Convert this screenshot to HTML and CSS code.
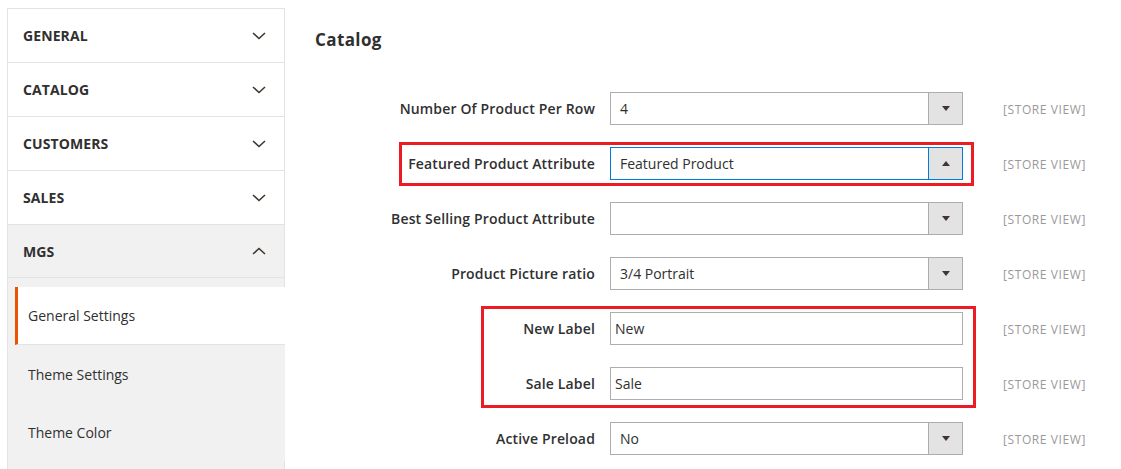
FILE: index.html
```html
<!DOCTYPE html>
<html lang="en">
<head>
<meta charset="utf-8">
<title>Configuration</title>
<link rel="stylesheet" href="styles.css">
</head>
<body>
<div class="page">
  <aside class="sidebar">
    <div class="tab">
      <span class="tab-title">General</span>
      <svg class="chev" width="14" height="8" viewBox="0 0 14 8"><path d="M1 1 L7 6.5 L13 1" fill="none" stroke="#41362f" stroke-width="1.6"/></svg>
    </div>
    <div class="tab">
      <span class="tab-title">Catalog</span>
      <svg class="chev" width="14" height="8" viewBox="0 0 14 8"><path d="M1 1 L7 6.5 L13 1" fill="none" stroke="#41362f" stroke-width="1.6"/></svg>
    </div>
    <div class="tab">
      <span class="tab-title">Customers</span>
      <svg class="chev" width="14" height="8" viewBox="0 0 14 8"><path d="M1 1 L7 6.5 L13 1" fill="none" stroke="#41362f" stroke-width="1.6"/></svg>
    </div>
    <div class="tab">
      <span class="tab-title">Sales</span>
      <svg class="chev" width="14" height="8" viewBox="0 0 14 8"><path d="M1 1 L7 6.5 L13 1" fill="none" stroke="#41362f" stroke-width="1.6"/></svg>
    </div>
    <div class="tab tab-open">
      <span class="tab-title">MGS</span>
      <svg class="chev" width="14" height="8" viewBox="0 0 14 8"><path d="M1 7 L7 1.5 L13 7" fill="none" stroke="#41362f" stroke-width="1.6"/></svg>
    </div>
    <ul class="subnav">
      <li class="subitem active">General Settings</li>
      <li class="subitem">Theme Settings</li>
      <li class="subitem">Theme Color</li>
    </ul>
  </aside>

  <main class="content">
    <h2 class="section-title">Catalog</h2>
    <div class="form">
      <div class="row">
        <label class="label">Number Of Product Per Row</label>
        <div class="select"><span class="value">4</span><span class="arrow"><span class="tri-down"></span></span></div>
        <span class="scope">[STORE VIEW]</span>
      </div>
      <div class="row">
        <label class="label">Featured Product Attribute</label>
        <div class="select focused"><span class="value">Featured Product</span><span class="arrow"><span class="tri-up"></span></span></div>
        <span class="scope">[STORE VIEW]</span>
      </div>
      <div class="row">
        <label class="label">Best Selling Product Attribute</label>
        <div class="select"><span class="value"></span><span class="arrow"><span class="tri-down"></span></span></div>
        <span class="scope">[STORE VIEW]</span>
      </div>
      <div class="row">
        <label class="label">Product Picture ratio</label>
        <div class="select"><span class="value">3/4 Portrait</span><span class="arrow"><span class="tri-down"></span></span></div>
        <span class="scope">[STORE VIEW]</span>
      </div>
      <div class="row">
        <label class="label">New Label</label>
        <div class="text-input">New</div>
        <span class="scope">[STORE VIEW]</span>
      </div>
      <div class="row">
        <label class="label">Sale Label</label>
        <div class="text-input">Sale</div>
        <span class="scope">[STORE VIEW]</span>
      </div>
      <div class="row">
        <label class="label">Active Preload</label>
        <div class="select"><span class="value">No</span><span class="arrow"><span class="tri-down"></span></span></div>
        <span class="scope">[STORE VIEW]</span>
      </div>
    </div>
  </main>
</div>
<div class="annot annot-1"></div>
<div class="annot annot-2"></div>
</body>
</html>
```

FILE: styles.css
```css
* { box-sizing: border-box; }

html, body {
  margin: 0;
  padding: 0;
  background: #ffffff;
  font-family: "Open Sans", "Noto Sans", sans-serif;
  color: #303030;
  overflow: hidden;
}

.page {
  display: flex;
  align-items: flex-start;
  padding: 8px 0 0 7px;
  height: 469px;
}

.sidebar {
  width: 278px;
  border: 1px solid #e3e3e3;
  border-bottom: none;
  flex: none;
  min-height: 470px;
  background: #f1f1f1;
}

.tab {
  height: 54px;
  display: flex;
  align-items: center;
  justify-content: space-between;
  padding: 0 18px 0 15px;
  border-bottom: 1px solid #e3e3e3;
  background: #ffffff;
}

.tab-open {
  background: #f1f1f1;
  height: 53px;
}

.tab-title {
  font-size: 14px;
  font-weight: 700;
  text-transform: uppercase;
  color: #303030;
  letter-spacing: 0.1px;
}

.chev {
  display: block;
}

.subnav {
  list-style: none;
  margin: 9px -1px 0 7px;
  padding: 0;
}

.subitem {
  height: 58px;
  display: flex;
  align-items: center;
  padding-left: 13px;
  font-size: 14px;
  color: #303030;
  background: #f1f1f1;
}

.subitem.active {
  background: #ffffff;
  border-left: 3px solid #eb5202;
  padding-left: 10px;
  border-bottom: 1px solid #e3e3e3;
}

.content {
  padding-left: 30px;
  flex: 1;
}

.section-title {
  margin: 22px 0 0 0;
  font-size: 17px;
  line-height: 20px;
  font-weight: 700;
  letter-spacing: 0.4px;
  color: #303030;
}

.form {
  margin-top: 42px;
  display: flex;
  flex-direction: column;
  gap: 22px;
}

.row {
  display: flex;
  align-items: center;
  height: 33px;
}

.label {
  width: 280px;
  text-align: right;
  margin-right: 15px;
  font-size: 14px;
  font-weight: 600;
  letter-spacing: 0.15px;
  color: #303030;
}

.select {
  width: 353px;
  height: 33px;
  border: 1px solid #adadad;
  display: flex;
  align-items: stretch;
  background: #ffffff;
}

.select .value {
  flex: 1;
  display: flex;
  align-items: center;
  padding-left: 9px;
  font-size: 14px;
  color: #303030;
}

.select .arrow {
  width: 34px;
  background: #e3e3e3;
  border-left: 1px solid #adadad;
  display: flex;
  align-items: center;
  justify-content: center;
}

.select.focused {
  border-color: #007bdb;
}

.select.focused .arrow {
  border-left-color: #007bdb;
}

.tri-down {
  width: 0;
  height: 0;
  border-left: 4.5px solid transparent;
  border-right: 4.5px solid transparent;
  border-top: 5px solid #41362f;
}

.tri-up {
  width: 0;
  height: 0;
  border-left: 4.5px solid transparent;
  border-right: 4.5px solid transparent;
  border-bottom: 5px solid #41362f;
}

.text-input {
  width: 353px;
  height: 33px;
  border: 1px solid #adadad;
  display: flex;
  align-items: center;
  padding-left: 4px;
  font-size: 14px;
  color: #303030;
  background: #ffffff;
}

.scope {
  margin-left: 40px;
  padding-top: 2px;
  font-size: 12px;
  color: #999999;
  letter-spacing: 0.6px;
  white-space: nowrap;
}

.annot {
  position: absolute;
  border: 3px solid #ec1c24;
  pointer-events: none;
}

.annot-1 {
  left: 399px;
  top: 142px;
  width: 575px;
  height: 44px;
}

.annot-2 {
  left: 481px;
  top: 306px;
  width: 495px;
  height: 102px;
}
```
